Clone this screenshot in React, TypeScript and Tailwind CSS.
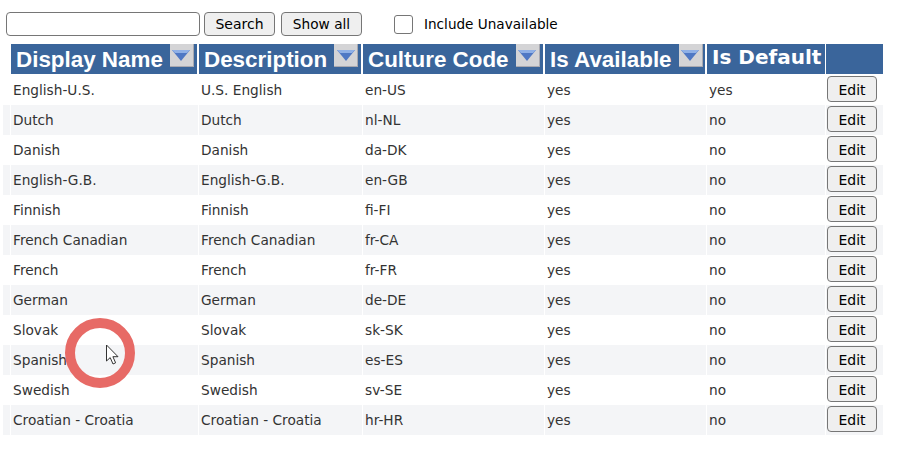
const rows = [
  ['English-U.S.', 'U.S. English', 'en-US', 'yes', 'yes'],
  ['Dutch', 'Dutch', 'nl-NL', 'yes', 'no'],
  ['Danish', 'Danish', 'da-DK', 'yes', 'no'],
  ['English-G.B.', 'English-G.B.', 'en-GB', 'yes', 'no'],
  ['Finnish', 'Finnish', 'fi-FI', 'yes', 'no'],
  ['French Canadian', 'French Canadian', 'fr-CA', 'yes', 'no'],
  ['French', 'French', 'fr-FR', 'yes', 'no'],
  ['German', 'German', 'de-DE', 'yes', 'no'],
  ['Slovak', 'Slovak', 'sk-SK', 'yes', 'no'],
  ['Spanish', 'Spanish', 'es-ES', 'yes', 'no'],
  ['Swedish', 'Swedish', 'sv-SE', 'yes', 'no'],
  ['Croatian - Croatia', 'Croatian - Croatia', 'hr-HR', 'yes', 'no'],
];

const gridCols = 'grid grid-cols-[8px_188px_164px_182px_162px_119px_57px]';

function SortButton() {
  return (
    <span className="w-[24px] h-[23px] bg-[#d4d4d6] border-b border-r border-[#a9a9b0] flex items-start justify-center pt-[6px] shrink-0">
      <svg width="18" height="11" viewBox="0 0 18 11">
        <path d="M0 0H18L9 11Z" fill="#4f78c4" />
        <path d="M0 0H18L15 3H3Z" fill="#8fb0e6" />
      </svg>
    </span>
  );
}

function HeaderCell({ label }: { label: string }) {
  return (
    <div className="h-[30px] bg-[#3a659b] border-r-2 border-white flex items-start pl-[5px] gap-[7px] overflow-hidden">
      <span className="text-[22.4px] leading-[32px] font-bold text-white font-['Liberation_Sans',sans-serif] whitespace-nowrap">{label}</span>
      <SortButton />
    </div>
  );
}

export default function App() {
  return (
    <div className="w-[902px] h-[452px] bg-white relative overflow-hidden font-['DejaVu_Sans',sans-serif] text-[13.7px] text-[#333]">
      {/* Barra di ricerca */}
      <div className="flex items-center h-[24px] mt-[12px] ml-[6px]">
        <input className="w-[194px] h-[24px] bg-white border border-[#767676] rounded-[4px]" />
        <button className="w-[71px] h-[24px] ml-[4px] bg-[#efefef] border border-[#767676] rounded-[4px] text-[14px] text-black">Search</button>
        <button className="w-[81px] h-[24px] ml-[6px] bg-[#efefef] border border-[#767676] rounded-[4px] text-[13.7px] text-black">Show all</button>
        <span className="w-[19px] h-[19px] ml-[32px] bg-white border border-[#767676] rounded-[3px]"></span>
        <span className="ml-[11px] text-[13.6px] text-black">Include Unavailable</span>
      </div>

      {/* Tabella */}
      <div className="mt-[8px] ml-[3px] w-[880px]">
        <div className={gridCols}>
          <div></div>
          <HeaderCell label="Display Name" />
          <HeaderCell label="Description" />
          <HeaderCell label="Culture Code" />
          <HeaderCell label="Is Available" />
          <div className="h-[30px] bg-[#3a659b] border-r border-white pl-[5px] text-[20px] leading-[26px] font-bold text-white whitespace-nowrap overflow-hidden">Is Default</div>
          <div className="h-[30px] bg-[#3a659b]"></div>
        </div>
        <div className="mt-px">
          {rows.map((row, i) => (
            <div key={row[0]} className={`${gridCols} h-[30px] items-center ${i % 2 === 1 ? 'bg-[#f4f5f7]' : 'bg-white'}`}>
              <div className="h-full border-r border-white"></div>
              {row.map((cell, j) => (
                <div key={j} className="h-full flex items-center pl-[2px] border-r border-white whitespace-nowrap">{cell}</div>
              ))}
              <div className="h-full flex items-center pl-px pb-[2px]">
                <button className="w-[50px] h-[26px] pt-[2px] bg-[#efefef] border border-[#767676] rounded-[4px] text-[14px] text-black">Edit</button>
              </div>
            </div>
          ))}
        </div>
      </div>

      {/* Evidenziazione del cursore */}
      <div className="absolute left-[65px] top-[318px] w-[70px] h-[70px] rounded-full border-[10px] border-[#e76a66]"></div>
      <svg className="absolute left-[105px] top-[344px]" width="16" height="22" viewBox="0 0 16 22">
        <path d="M1.5 1V17L5.2 13.6L8 20L10.6 18.8L7.9 12.7H13Z" fill="#fff" stroke="#333" strokeWidth="1" />
      </svg>
    </div>
  );
}
